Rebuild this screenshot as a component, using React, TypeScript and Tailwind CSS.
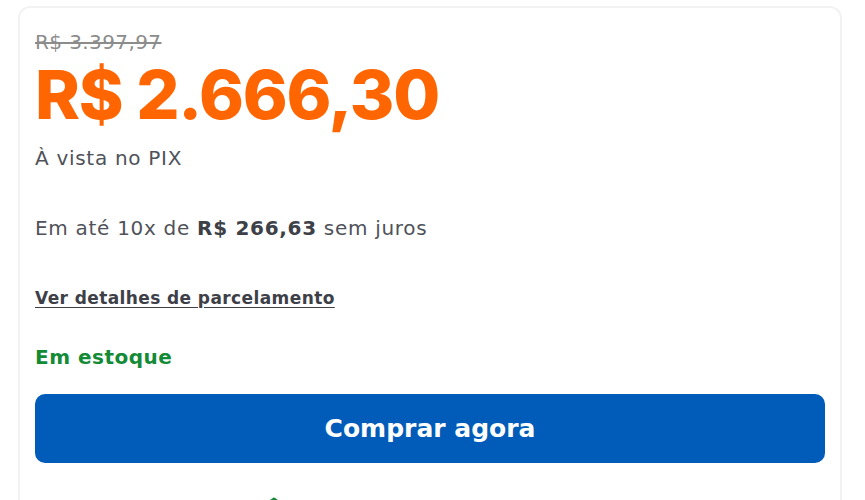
import { ShieldCheck } from "lucide-react";

export default function App() {
  return (
    <div className="min-h-screen bg-white pl-[18px] pr-[23px] pt-[6px] font-['DejaVu_Sans',sans-serif]">
      <div className="rounded-xl border-2 border-[#f2f2f2] px-[15px] pt-[22px] pb-6">
        <p className="text-[20px] leading-6 tracking-[0.4px] text-[#8c8c8c] line-through">R$ 3.397,97</p>
        <p className="mt-[2px] font-['Inter',sans-serif] text-[68px] font-extrabold leading-[76px] tracking-[-1.2px] text-[#ff6500]">
          R$ 2.666,30
        </p>
        <p className="mt-[12px] text-[20px] leading-7 tracking-[0.7px] text-[#50525a]">À vista no PIX</p>
        <p className="mt-[42px] text-[20px] leading-7 tracking-[0.7px] text-[#50525a]">
          Em até 10x de <span className="font-bold text-[#3e4048]">R$ 266,63</span> sem juros
        </p>
        <a
          href="#"
          className="mt-[44px] inline-block text-[17px] font-bold leading-6 tracking-[0.4px] text-[#3e4048] underline underline-offset-[3px]"
        >
          Ver detalhes de parcelamento
        </a>
        <p className="mt-[32px] text-[20px] font-bold leading-7 tracking-[0.5px] text-[#138a36]">Em estoque</p>
        <button className="mt-[23px] flex h-[69px] w-full items-center justify-center rounded-[10px] bg-[#005cb8] text-[25px] font-bold text-white">
          Comprar agora
        </button>
        {/* compra segura badge */}
        <div className="mt-[34px] flex pl-[228px] text-[#138a36]">
          <ShieldCheck size={22} strokeWidth={2.5} aria-label="Compra segura" />
        </div>
      </div>
    </div>
  );
}
